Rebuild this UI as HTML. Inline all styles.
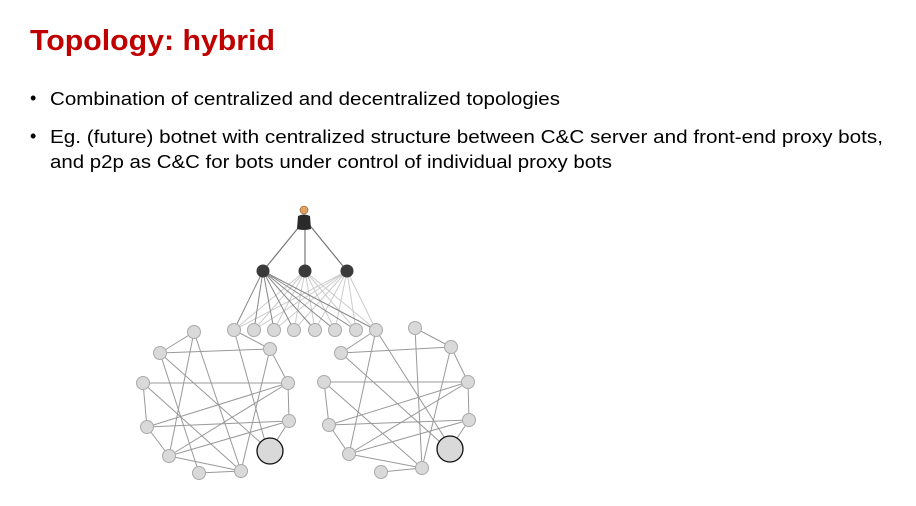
<!DOCTYPE html>
<html><head><meta charset="utf-8"><style>
html,body{margin:0;padding:0;background:#fff;}
svg{display:block}
</style></head><body>
<svg width="916" height="506" viewBox="0 0 916 506" xmlns="http://www.w3.org/2000/svg">
<g font-family="Liberation Sans, sans-serif">
<text x="30" y="50" font-size="29" font-weight="bold" fill="#c00000" textLength="245" lengthAdjust="spacingAndGlyphs">Topology: hybrid</text>
<text x="30" y="104" font-size="18" fill="#000">•</text>
<text x="50" y="105" font-size="18" fill="#000" textLength="510" lengthAdjust="spacingAndGlyphs">Combination of centralized and decentralized topologies</text>
<text x="30" y="142" font-size="18" fill="#000">•</text>
<text x="50" y="143" font-size="18" fill="#000" textLength="833" lengthAdjust="spacingAndGlyphs">Eg. (future) botnet with centralized structure between C&amp;C server and front-end proxy bots,</text>
<text x="50" y="168" font-size="18" fill="#000" textLength="562" lengthAdjust="spacingAndGlyphs">and p2p as C&amp;C for bots under control of individual proxy bots</text>
</g>
<g stroke="#777" stroke-width="1.2">
<line x1="303" y1="222" x2="263" y2="271"/><line x1="305" y1="222" x2="305" y2="271"/><line x1="307" y1="222" x2="347" y2="271"/>
</g>
<g stroke="#ccc" stroke-width="1">
<line x1="305" y1="271" x2="234" y2="330"/><line x1="305" y1="271" x2="254" y2="330"/><line x1="305" y1="271" x2="274" y2="330"/><line x1="305" y1="271" x2="294" y2="330"/><line x1="305" y1="271" x2="315" y2="330"/><line x1="305" y1="271" x2="335" y2="330"/><line x1="305" y1="271" x2="356" y2="330"/><line x1="305" y1="271" x2="376" y2="330"/>
<line x1="347" y1="271" x2="234" y2="330"/><line x1="347" y1="271" x2="254" y2="330"/><line x1="347" y1="271" x2="274" y2="330"/><line x1="347" y1="271" x2="294" y2="330"/><line x1="347" y1="271" x2="315" y2="330"/><line x1="347" y1="271" x2="335" y2="330"/><line x1="347" y1="271" x2="356" y2="330"/><line x1="347" y1="271" x2="376" y2="330"/>
</g>
<g stroke="#888" stroke-width="1">
<line x1="263" y1="271" x2="234" y2="330"/><line x1="263" y1="271" x2="254" y2="330"/><line x1="263" y1="271" x2="274" y2="330"/><line x1="263" y1="271" x2="294" y2="330"/><line x1="263" y1="271" x2="315" y2="330"/><line x1="263" y1="271" x2="335" y2="330"/><line x1="263" y1="271" x2="356" y2="330"/><line x1="263" y1="271" x2="376" y2="330"/>
</g>
<g stroke="#999" stroke-width="1">
<line x1="194" y1="332" x2="160" y2="353"/><line x1="194" y1="332" x2="169" y2="456"/><line x1="194" y1="332" x2="241" y2="471"/>
<line x1="160" y1="353" x2="270" y2="349"/><line x1="160" y1="353" x2="270" y2="451"/><line x1="160" y1="353" x2="199" y2="473"/>
<line x1="143" y1="383" x2="288" y2="383"/><line x1="143" y1="383" x2="147" y2="427"/><line x1="143" y1="383" x2="241" y2="471"/>
<line x1="270" y1="349" x2="288" y2="383"/><line x1="270" y1="349" x2="241" y2="471"/>
<line x1="288" y1="383" x2="147" y2="427"/><line x1="288" y1="383" x2="169" y2="456"/><line x1="288" y1="383" x2="289" y2="421"/>
<line x1="289" y1="421" x2="147" y2="427"/><line x1="289" y1="421" x2="169" y2="456"/><line x1="289" y1="421" x2="270" y2="451"/>
<line x1="147" y1="427" x2="169" y2="456"/><line x1="169" y1="456" x2="241" y2="471"/><line x1="199" y1="473" x2="241" y2="471"/>
<line x1="234" y1="330" x2="270" y2="349"/><line x1="234" y1="330" x2="266" y2="445"/>
</g>
<g stroke="#999" stroke-width="1">
<line x1="415" y1="328" x2="451" y2="347"/><line x1="415" y1="328" x2="422" y2="468"/>
<line x1="376" y1="330" x2="341" y2="353"/><line x1="376" y1="330" x2="446" y2="440"/><line x1="376" y1="330" x2="349" y2="454"/>
<line x1="341" y1="353" x2="451" y2="347"/><line x1="341" y1="353" x2="440" y2="442"/>
<line x1="324" y1="382" x2="468" y2="382"/><line x1="324" y1="382" x2="329" y2="425"/><line x1="324" y1="382" x2="422" y2="468"/>
<line x1="451" y1="347" x2="468" y2="382"/><line x1="451" y1="347" x2="422" y2="468"/>
<line x1="468" y1="382" x2="329" y2="425"/><line x1="468" y1="382" x2="349" y2="454"/><line x1="468" y1="382" x2="469" y2="420"/>
<line x1="469" y1="420" x2="329" y2="425"/><line x1="469" y1="420" x2="349" y2="454"/><line x1="469" y1="420" x2="450" y2="449"/>
<line x1="329" y1="425" x2="349" y2="454"/><line x1="349" y1="454" x2="422" y2="468"/><line x1="381" y1="472" x2="422" y2="468"/>
</g>
<g fill="#d9d9d9" stroke="#aaa" stroke-width="1">
<circle cx="234" cy="330" r="6.5"/><circle cx="254" cy="330" r="6.5"/><circle cx="274" cy="330" r="6.5"/><circle cx="294" cy="330" r="6.5"/><circle cx="315" cy="330" r="6.5"/><circle cx="335" cy="330" r="6.5"/><circle cx="356" cy="330" r="6.5"/><circle cx="376" cy="330" r="6.5"/>
<circle cx="194" cy="332" r="6.5"/><circle cx="160" cy="353" r="6.5"/><circle cx="270" cy="349" r="6.5"/><circle cx="143" cy="383" r="6.5"/><circle cx="288" cy="383" r="6.5"/><circle cx="147" cy="427" r="6.5"/><circle cx="289" cy="421" r="6.5"/><circle cx="169" cy="456" r="6.5"/><circle cx="199" cy="473" r="6.5"/><circle cx="241" cy="471" r="6.5"/>
<circle cx="415" cy="328" r="6.5"/><circle cx="341" cy="353" r="6.5"/><circle cx="451" cy="347" r="6.5"/><circle cx="324" cy="382" r="6.5"/><circle cx="468" cy="382" r="6.5"/><circle cx="329" cy="425" r="6.5"/><circle cx="469" cy="420" r="6.5"/><circle cx="349" cy="454" r="6.5"/><circle cx="381" cy="472" r="6.5"/><circle cx="422" cy="468" r="6.5"/>
</g>
<g fill="#d9d9d9" stroke="#111" stroke-width="1.3">
<circle cx="270" cy="451" r="13"/><circle cx="450" cy="449" r="13"/>
</g>
<g fill="#3a3a3a">
<circle cx="263" cy="271" r="6.5"/><circle cx="305" cy="271" r="6.5"/><circle cx="347" cy="271" r="6.5"/>
</g>
<circle cx="304" cy="210" r="4" fill="#e0a060" stroke="#8a5a2a" stroke-width="0.6"/>
<path d="M298 216 Q304 213 310 216 L311 229 Q304 231 297 229 Z" fill="#2a2a2a"/>
</svg>
</body></html>
